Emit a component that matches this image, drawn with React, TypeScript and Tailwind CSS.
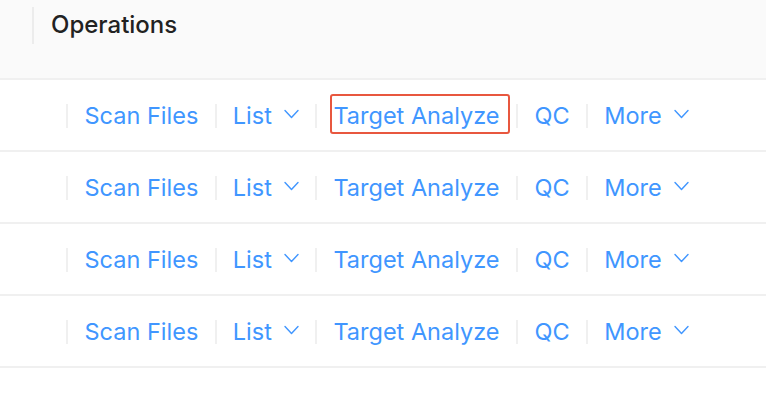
import React from "react";

const Chevron = () => (
  <svg width="15" height="10" viewBox="0 0 15 10" fill="none" className="ml-[12px] mt-[-4px]">
    <path d="M1 1.5L7.5 8.5L14 1.5" stroke="#4096ff" strokeWidth="1.4" strokeLinecap="round" strokeLinejoin="round" />
  </svg>
);

const Sep = () => <div className="w-[2px] h-[24px] bg-[#f0f0f0]" />;

const Row = ({ highlight }: { highlight?: boolean }) => (
  <div className="h-[72px] border-b-2 border-[#f0f0f0] flex items-center pt-[2px] pl-[66px] text-[23.5px] leading-[32px] text-[#4096ff]">
    <Sep />
    <span className="px-[16.5px]">Scan Files</span>
    <Sep />
    <span className="px-[16px] flex items-center">List<Chevron /></span>
    <Sep />
    <span className="px-[16.5px] relative">
      Target Analyze
      {highlight && (
        <span className="absolute left-[13px] right-[6px] top-[-6px] bottom-[-2px] border-2 border-[#e8573f] rounded-[3px]" />
      )}
    </span>
    <Sep />
    <span className="px-[16.5px]">QC</span>
    <Sep />
    <span className="px-[16px] flex items-center">More<Chevron /></span>
  </div>
);

export default function App() {
  return (
    <div className="w-[766px] h-[414px] bg-white overflow-hidden" style={{ fontFamily: "Inter, 'Noto Sans', sans-serif" }}>
      <div className="h-[80px] bg-[#fafafa] border-b-2 border-[#f0f0f0] flex items-start pl-[32px] pt-[7px]">
        <div className="w-[2px] h-[37px] bg-[#ececec]" />
        <span className="ml-[17px] mt-[2px] text-[24px] leading-[32px] font-medium text-[#222]">Operations</span>
      </div>
      <Row highlight />
      <Row />
      <Row />
      <Row />
    </div>
  );
}
